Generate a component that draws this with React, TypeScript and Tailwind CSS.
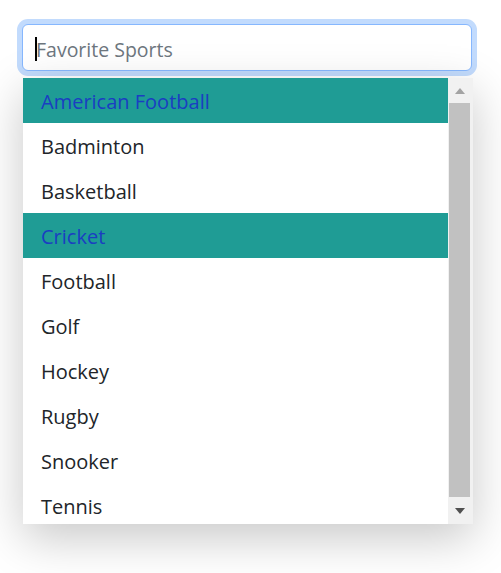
import React from 'react';

const sports = ['American Football', 'Badminton', 'Basketball', 'Cricket', 'Football', 'Golf', 'Hockey', 'Rugby', 'Snooker', 'Tennis'];
const selected = ['American Football', 'Cricket'];

export default function App() {
  return (
    <div className="w-[501px] h-[573px] bg-white overflow-hidden font-['Open_Sans',sans-serif]">
      <div className="pt-[24px] pl-[22px] w-[472px]">
        {/* Input */}
        <div className="h-[47px] w-[450px] rounded-[6px] border border-[#86b7fe] bg-white shadow-[0_0_0_5px_#c2dbfd] flex items-center pl-[12px]">
          <span className="w-[2px] h-[24px] mt-[2px] bg-black" />
          <span className="text-[19.5px] text-[#6c757d] leading-none -ml-[1px] pt-[4px]">Favorite Sports</span>
        </div>

        {/* Dropdown list */}
        <div className="mt-[7px] ml-[1px] w-[450px] h-[446px] flex bg-white shadow-[0_14px_44px_rgba(0,0,0,0.22)] overflow-hidden">
          <div className="flex-1 flex flex-col">
            {sports.map((s) => {
              const isSel = selected.includes(s);
              return (
                <div
                  key={s}
                  className={`h-[45px] shrink-0 flex items-center pl-[18px] pt-[2px] text-[20px] ${
                    isSel ? 'bg-[#1f9c95] text-[#1a3ec2]' : 'bg-white text-[#212529]'
                  }`}
                >
                  {s}
                </div>
              );
            })}
          </div>
          {/* Scrollbar */}
          <div className="w-[25px] bg-[#f1f1f1] flex flex-col items-center pr-[2px]">
            <div className="h-[25px] flex items-center justify-center">
              <svg width="10" height="6" viewBox="0 0 10 6"><path d="M0 6 L5 0 L10 6 Z" fill="#a3a3a3" /></svg>
            </div>
            <div className="w-[21px] h-[394px] bg-[#c1c1c1]" />
            <div className="flex-1 flex items-center justify-center">
              <svg width="10" height="6" viewBox="0 0 10 6"><path d="M0 0 L5 6 L10 0 Z" fill="#505050" /></svg>
            </div>
          </div>
        </div>
      </div>
    </div>
  );
}
